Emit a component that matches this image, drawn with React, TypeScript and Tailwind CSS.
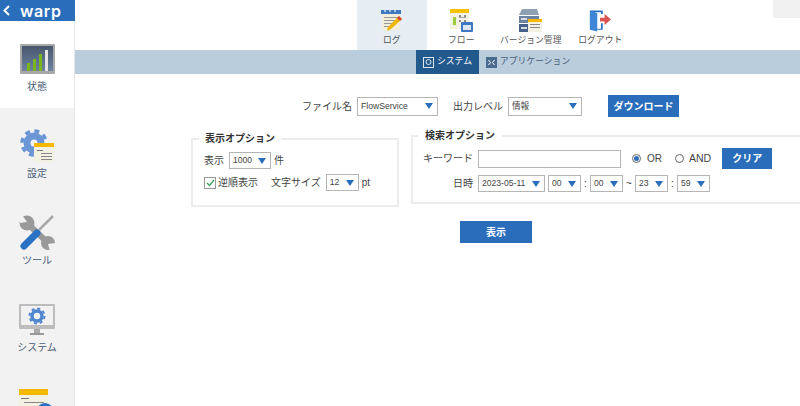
const font = "font-['Liberation_Sans','Noto_Sans_CJK_JP',sans-serif]";

const Caret = () => (
  <svg width="8" height="6" viewBox="0 0 8 6" className="shrink-0">
    <path d="M0 0h8L4 6z" fill="#2a6ebb" />
  </svg>
);

const Select = ({ value, className }: { value: string; className: string }) => (
  <div className={`flex items-center justify-between whitespace-nowrap bg-white border border-[#b5b5b5] pl-[3px] pr-[4px] text-[8.6px] text-[#444] ${className}`}>
    <span>{value}</span>
    <Caret />
  </div>
);

const Radio = ({ on }: { on?: boolean }) => (
  <span className="flex h-[9px] w-[9px] items-center justify-center rounded-full border border-[#666] bg-white">
    {on && <span className="h-[5px] w-[5px] rounded-full bg-[#2a6ebb]" />}
  </span>
);

const StatusIcon = () => (
  <svg width="35" height="30" viewBox="0 0 35 30">
    <defs>
      <linearGradient id="screen" x1="0" y1="0" x2="0" y2="1">
        <stop offset="0" stopColor="#46566c" />
        <stop offset="1" stopColor="#6f84a0" />
      </linearGradient>
    </defs>
    <rect width="35" height="30" rx="1" fill="#a8a8a8" />
    <rect x="2" y="2" width="31" height="25" fill="url(#screen)" />
    <rect x="7" y="19" width="3" height="8" fill="#7ab51d" />
    <rect x="13" y="15" width="3" height="12" fill="#7ab51d" />
    <rect x="19" y="10" width="3" height="17" fill="#7ab51d" />
    <rect x="25" y="6" width="3" height="21" fill="#e4e4e4" />
  </svg>
);

const SettingIcon = () => (
  <svg width="35" height="36" viewBox="0 0 35 36">
    <circle cx="14" cy="15" r="7" fill="none" stroke="#6b96d6" strokeWidth="7" />
    <circle cx="14" cy="15" r="12" fill="none" stroke="#6b96d6" strokeWidth="3.5" strokeDasharray="5 4.42" />
    <rect x="14" y="15" width="20" height="19" fill="#f3f1e2" />
    <rect x="14" y="15" width="20" height="4" fill="#f6b800" />
    <rect x="17" y="22" width="6" height="1" fill="#777" />
    <rect x="21" y="25" width="11" height="1" fill="#888" />
    <rect x="21" y="28" width="11" height="1" fill="#888" />
    <rect x="21" y="31" width="11" height="1" fill="#888" />
  </svg>
);

const ToolIcon = () => (
  <svg width="36" height="36" viewBox="0 0 36 36">
    <path d="M8 8L29 28" stroke="#9a9a9a" strokeWidth="6" />
    <circle cx="8" cy="8" r="7.5" fill="#9a9a9a" />
    <circle cx="29" cy="28" r="7" fill="#9a9a9a" />
    <path d="M3 0l5 7-7 1-1-8zM36 28l-7 1 2 7 5 0z" fill="#f2f2f2" />
    <path d="M34 1L20 15" stroke="#a8a8a8" strokeWidth="2.5" />
    <path d="M18 18L5 31" stroke="#2a72c4" strokeWidth="7" strokeLinecap="round" />
  </svg>
);

const MonitorIcon = () => (
  <svg width="36" height="32" viewBox="0 0 36 32">
    <rect width="36" height="25" rx="1" fill="#bdbdbd" />
    <rect x="2" y="2" width="32" height="19" fill="#f1f1f1" />
    <rect x="15" y="25" width="6" height="4" fill="#aaa" />
    <rect x="11" y="29" width="14" height="2" fill="#999" />
    <circle cx="18" cy="12" r="5" fill="none" stroke="#4f86cf" strokeWidth="3.5" />
    <circle cx="18" cy="12" r="7.5" fill="none" stroke="#4f86cf" strokeWidth="2" strokeDasharray="3 2.9" />
  </svg>
);

const DocIcon = () => (
  <svg width="36" height="37" viewBox="0 0 36 37">
    <rect width="29" height="37" fill="#f3f1e2" />
    <rect width="29" height="6" fill="#f6b800" />
    <rect x="2" y="9" width="8" height="1" fill="#777" />
    <rect x="5" y="13" width="20" height="1" fill="#888" />
    <circle cx="26" cy="23" r="9" fill="#2a72c4" />
  </svg>
);

const LogIcon = () => (
  <svg width="22" height="22" viewBox="0 0 22 22">
    <rect x="1" y="2" width="18" height="19" fill="#f1efdc" />
    <rect x="0" y="1" width="20" height="4" fill="#3f78c0" />
    <path d="M3 1h2v2H3zM8 1h2v2H8zM13 1h2v2h-2z" fill="#a9c4e4" />
    <rect x="3" y="8" width="14" height="1" fill="#999" />
    <rect x="3" y="11" width="14" height="1" fill="#999" />
    <rect x="3" y="14" width="9" height="1" fill="#999" />
    <rect x="3" y="17" width="5" height="1" fill="#999" />
    <path d="M18 7l3 3-11 10-4 2 1-4z" fill="#f2b705" />
    <path d="M18 7l3 3-2 2-3-3z" fill="#d6453d" />
  </svg>
);

const FlowIcon = () => (
  <svg width="24" height="23" viewBox="0 0 24 23">
    <rect x="1" y="0" width="19" height="20" fill="#f3f1e2" />
    <rect x="1" y="0" width="19" height="4" fill="#f6c000" />
    <rect x="4" y="8" width="3" height="8" fill="#9ccc3c" />
    <path d="M10 6h2v2h-2zM15 6h2v2h-2zM10 11h2v2h-2zM15 11h2v2h-2zM10 8h7v.7h-7z" fill="#8a8a8a" />
    <rect x="12" y="13" width="12" height="10" rx="1" fill="#3f78c0" />
    <rect x="14" y="16" width="8" height="5" fill="#dbe6f3" />
  </svg>
);

const VersionIcon = () => (
  <svg width="23" height="23" viewBox="0 0 23 23">
    <path d="M3 0h15l2 6H0z" fill="#8fa0b3" />
    <rect y="7" width="20" height="7" fill="#6b83a0" />
    <rect y="15" width="20" height="8" fill="#45618a" />
    <rect x="2" y="9" width="6" height="2" fill="#d5dbe2" />
    <rect x="2" y="18" width="6" height="2" fill="#d5dbe2" />
    <rect x="9" y="10" width="14" height="13" fill="#f3f1e2" />
    <rect x="9" y="10" width="14" height="3" fill="#f6b800" />
    <rect x="11" y="15" width="10" height="1" fill="#888" />
    <rect x="11" y="18" width="10" height="1" fill="#888" />
  </svg>
);

const LogoutIcon = () => (
  <svg width="22" height="23" viewBox="0 0 24 24">
    <path d="M1 1h14v4h-2V3H7v18h6v-6h2v7H1z" fill="#2a72c4" />
    <path d="M1 1l8 3v20l-8-2z" fill="#3f86d8" />
    <path d="M12 9h5V5l7 6-7 6v-4h-5z" fill="#d9534f" />
  </svg>
);

const sideItems = [
  { label: "状態", icon: <StatusIcon />, active: true },
  { label: "設定", icon: <SettingIcon /> },
  { label: "ツール", icon: <ToolIcon /> },
  { label: "システム", icon: <MonitorIcon /> },
  { label: "", icon: <DocIcon /> },
];

const topTabs = [
  { label: "ログ", icon: <LogIcon />, active: true },
  { label: "フロー", icon: <FlowIcon /> },
  { label: "バージョン管理", icon: <VersionIcon /> },
  { label: "ログアウト", icon: <LogoutIcon /> },
];

export default function App() {
  return (
    <div className={`${font} flex h-[406px] w-[800px] overflow-hidden bg-white text-[10px] text-[#444]`}>
      <aside className="flex h-full w-[75px] shrink-0 flex-col overflow-hidden">
        <div className="flex h-[21px] shrink-0 items-center gap-[10px] bg-[#2a6ebb] pl-[3px] text-white">
          <svg width="7" height="11" viewBox="0 0 7 11">
            <path d="M6 1L1.5 5.5 6 10" fill="none" stroke="#fff" strokeWidth="2" />
          </svg>
          <span className="font-['Inter',sans-serif] text-[16px] font-semibold leading-none tracking-[0.6px]">warp</span>
        </div>
        <div className="flex-1 overflow-hidden border-r border-[#e6e6e6] bg-[#f2f2f2]">
          {sideItems.map((item) => (
            <div
              key={item.label || "doc"}
              className={`flex h-[87px] flex-col items-center pt-[20px] ${item.active ? "bg-white" : ""}`}
            >
              <div className="flex h-[36px] items-center">{item.icon}</div>
              <span className="mt-[3px] text-[10px] leading-[14px] text-[#4a5d78]">{item.label}</span>
            </div>
          ))}
        </div>
      </aside>

      <main className="min-w-0 flex-1">
        <header className="relative flex h-[50px] pl-[282px]">
          {topTabs.map((tab) => (
            <div
              key={tab.label}
              className={`flex w-[69.5px] flex-col items-center pt-[7px] ${tab.active ? "bg-[#e6edf3]" : ""}`}
            >
              <div className="flex h-[26px] items-center">{tab.icon}</div>
              <span className="mt-[1px] whitespace-nowrap text-[8.8px] leading-[12px] text-[#555]">{tab.label}</span>
            </div>
          ))}
          <div className="absolute right-0 top-0 h-[18px] w-[27px] bg-[#f0f0f0]" />
        </header>

        <nav className="flex h-[24px] bg-[#b9cddd] pl-[341px] text-[8.8px]">
          <div className="flex w-[63px] items-center gap-[3px] bg-[#235a8e] pl-[7px] text-white">
            <svg width="11" height="11" viewBox="0 0 11 11" className="shrink-0">
              <rect x="0.5" y="0.5" width="10" height="10" fill="none" stroke="#dce6ef" />
              <circle cx="5.5" cy="5" r="2.5" fill="none" stroke="#dce6ef" />
            </svg>
            <span>システム</span>
          </div>
          <div className="flex items-center gap-[3px] pl-[7px] text-[#4a5d78]">
            <svg width="11" height="11" viewBox="0 0 11 11">
              <rect width="11" height="11" fill="#4a6b8f" />
              <path d="M2.5 3l2 2.5-2 2.5M8.5 3l-2 2.5 2 2.5" fill="none" stroke="#fff" />
            </svg>
            <span>アプリケーション</span>
          </div>
        </nav>

        <div className="mt-[21px] flex h-[22px] items-center pl-[227px]">
          <span>ファイル名</span>
          <Select value="FlowService" className="ml-[5px] h-[19px] w-[81px]" />
          <span className="ml-[15px]">出力レベル</span>
          <Select value="情報" className="ml-[5px] h-[19px] w-[74px]" />
          <button className="ml-[26px] h-[22px] w-[71px] bg-[#2a6ebb] font-bold text-white">ダウンロード</button>
        </div>

        <div className="mt-[14px] flex items-start pl-[116px]">
          <fieldset className="mt-[3px] h-[73px] w-[208px] shrink-0 border-2 border-[#ececec] pl-[11px]">
            <legend className="-ml-[5px] px-[6px] font-bold leading-[10px] text-[#333]">表示オプション</legend>
            <div className="mt-[8px] flex items-center">
              <span>表示</span>
              <Select value="1000" className="ml-[5px] h-[17px] w-[42px]" />
              <span className="ml-[3px]">件</span>
            </div>
            <div className="mt-[5px] flex items-center">
              <span className="flex h-[12px] w-[12px] items-center justify-center border border-[#999] bg-white">
                <svg width="9" height="8" viewBox="0 0 9 8">
                  <path d="M1 4l2.5 2.5L8 1" fill="none" stroke="#3aa655" strokeWidth="1.3" />
                </svg>
              </span>
              <span className="ml-[2px]">逆順表示</span>
              <span className="ml-[13px]">文字サイズ</span>
              <Select value="12" className="ml-[5px] h-[17px] w-[33px]" />
              <span className="ml-[3px]">pt</span>
            </div>
          </fieldset>

          <fieldset className="ml-[12px] h-[73px] w-[400px] shrink-0 border-2 border-r-0 border-[#ececec] pl-[10px]">
            <legend className="-ml-[5px] px-[7px] font-bold leading-[10px] text-[#333]">検索オプション</legend>
            <div className="mt-[7px] flex items-center">
              <span>キーワード</span>
              <input className="ml-[5px] h-[18px] w-[143px] border border-[#b5b5b5] bg-white" />
              <span className="ml-[11px]"><Radio on /></span>
              <span className="ml-[6px]">OR</span>
              <span className="ml-[13px]"><Radio /></span>
              <span className="ml-[5px] text-[10.5px]">AND</span>
              <button className="ml-[11px] h-[21px] w-[50px] bg-[#2a6ebb] font-bold text-white">クリア</button>
            </div>
            <div className="mt-[6px] flex items-center pl-[30px]">
              <span>日時</span>
              <Select value="2023-05-11" className="ml-[5px] h-[17px] w-[67px]" />
              <Select value="00" className="ml-[3px] h-[17px] w-[33px]" />
              <span className="w-[9px] text-center">:</span>
              <Select value="00" className="h-[17px] w-[33px]" />
              <span className="w-[12px] text-center">~</span>
              <Select value="23" className="h-[17px] w-[33px]" />
              <span className="w-[9px] text-center">:</span>
              <Select value="59" className="h-[17px] w-[33px]" />
            </div>
          </fieldset>
        </div>

        <div className="mt-[14px] pl-[385px]">
          <button className="h-[22px] w-[72px] bg-[#2a6ebb] font-bold text-white">表示</button>
        </div>
      </main>
    </div>
  );
}
